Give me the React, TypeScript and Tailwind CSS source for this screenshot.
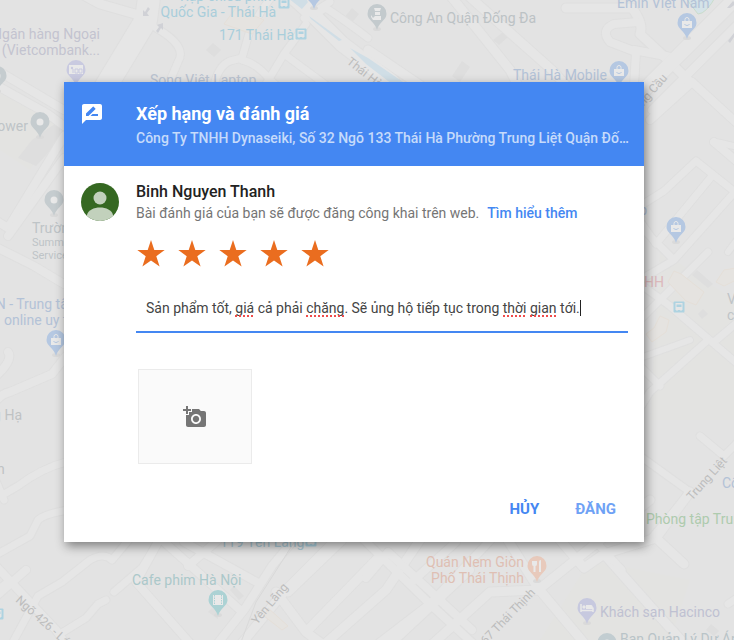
import { useState } from "react";
import { MdAddAPhoto, MdRateReview } from "react-icons/md";

type PinKind = "place" | "shop" | "bank" | "food" | "film" | "hotel" | "police";

const roads: { d: string; w: number }[] = [
  // top left
  { d: "M78 -8L100 4L142 16L132 34L104 90", w: 9 },
  { d: "M150 -10L146 20L100 96", w: 22 },
  { d: "M156 28Q188 46 178 62L166 90", w: 7 },
  { d: "M214 86Q218 66 230 61L242 58L250 30L262 10L272 -4", w: 7 },
  { d: "M242 60Q258 64 270 80L284 92M284 54L266 84M284 54L306 24M284 54L330 88", w: 7 },
  { d: "M290 -6L312 14L342 44L392 82", w: 15 },
  { d: "M304 18L330 2M308 18L326 8Q350 24 368 38", w: 7 },
  { d: "M368 50L430 92", w: 9 },
  { d: "M446 -10L510 70L520 90M462 -10L552 70L570 90", w: 9 },
  // top right
  { d: "M566 8L632 8Q644 24 640 34L668 60L690 82", w: 9 },
  { d: "M638 22L614 24Q600 30 610 42L636 52L634 86M634 50L676 58", w: 8 },
  { d: "M740 -6L640 94", w: 14 },
  { d: "M744 18L652 110M650 120L692 82L740 126M714 142L740 164", w: 8 },
  { d: "M640 206L664 191L696 161L740 196M640 221L656 244L712 176M640 226L674 260L740 186M640 280L674 260M640 284L670 306L740 366", w: 7 },
  { d: "M640 320L708 252M708 340L650 392L640 408M660 386L636 362M714 342L740 320M700 436L724 456L740 440M640 456L690 492L650 540", w: 7 },
  { d: "M740 236L728 252M734 146L716 142M640 358L690 340", w: 6 },
  // left side
  { d: "M-6 84L48 114L64 126M0 72L64 110M64 136L8 228L-8 218", w: 8 },
  { d: "M64 158L8 236M-6 246L34 266L64 284M-6 378Q14 360 8 352M-6 404Q0 394 10 392L52 374L66 356", w: 8 },
  { d: "M-6 500L18 486Q42 468 66 462M-6 556L30 536L38 520Q44 514 68 510M-6 476L4 500", w: 7 },
  // bottom left
  { d: "M-6 564L56 630L70 650M-6 598L26 570M6 584L-6 594", w: 8 },
  { d: "M14 640L38 596L62 582L90 560Q104 552 112 560L132 536M60 634L86 618L98 604L106 600M114 592L142 568L158 542", w: 7 },
  { d: "M158 542L136 582L196 650M162 540L240 610M188 566L218 540M184 542L260 584M214 648L244 610L272 566L302 530", w: 8 },
  { d: "M238 648L284 592L330 546M276 592L306 632L380 556M306 632L330 650M342 540L288 592M318 650L386 590L420 540", w: 9 },
  // bottom middle and right
  { d: "M360 536L430 604L480 650M388 552L366 578M388 552L472 630M414 580L456 542M430 604L500 530M370 650L430 604M380 654L470 570", w: 8 },
  { d: "M504 534L538 588L590 650M426 650L490 592L538 590L650 500M560 540L584 568L604 554L652 608L690 650M604 554L656 538L684 564M656 538L690 492", w: 9 },
  { d: "M728 604L740 596M596 542L622 570", w: 7 },
];

const buildings = [
  "M343 19L352 8L359 14L350 25Z",
  "M206 50L213 43L221 50L214 57Z",
  "M18 158L32 140L62 119L58 142L36 166Z",
  "M452 76L462 61L470 67L460 82Z",
  "M493 40L503 32L508 37L499 45Z",
  "M692 275L697 270L713 284L708 288Z",
  "M698 314L703 309L708 314L702 319Z",
  "M230 590L234 586L244 596L239 600Z",
  "M706 630L711 624L719 631L714 636Z",
  "M208 612L212 608L218 612L218 619Z",
];

const areas = [
  "M224 24L236 8L264 20L252 34Z",
  "M668 282L674 271L681 274L704 292L696 305L686 301Z",
  "M716 282L724 270L736 268L736 280L724 286Z",
  "M646 334L654 328L660 316L669 320L666 332L652 342Z",
  "M264 616L268 608L288 626L282 630Z",
];

const pins: { x: number; y: number; kind: PinKind; color: string }[] = [
  { x: -3, y: 76, kind: "place", color: "#c5cccf" },
  { x: 76, y: 70, kind: "bank", color: "#c9cae0" },
  { x: 40, y: 122, kind: "place", color: "#c5cccf" },
  { x: 54, y: 200, kind: "place", color: "#c5cccf" },
  { x: 56, y: 340, kind: "shop", color: "#b5c8e2" },
  { x: 314, y: -7, kind: "shop", color: "#b5c8e2" },
  { x: 377, y: 14, kind: "police", color: "#c3cacd" },
  { x: 687, y: 23, kind: "shop", color: "#b5c8e2" },
  { x: 619, y: 71, kind: "shop", color: "#b5c8e2" },
  { x: 676, y: 227, kind: "shop", color: "#b5c8e2" },
  { x: 218, y: 600, kind: "film", color: "#acd2d4" },
  { x: 537, y: 566, kind: "food", color: "#e8cabc" },
  { x: 587, y: 608, kind: "hotel", color: "#c7c9df" },
  { x: 607, y: 643, kind: "place", color: "#c2cdd1" },
];

const stops = [
  { x: 284, y: 3 },
  { x: 301, y: 34 },
  { x: 679, y: 307 },
  { x: 311, y: 541 },
  { x: -2, y: 614 },
];

const labels: {
  text: string;
  x: number;
  y: number;
  color: string;
  end?: boolean;
  small?: boolean;
  rotate?: number;
}[] = [
  { text: "Rạp chiếu phim", x: 276, y: 1, color: "#a9cedb", end: true },
  { text: "Quốc Gia - Thái Hà", x: 276, y: 17, color: "#a9cedb", end: true },
  { text: "171 Thái Hà", x: 294, y: 40, color: "#a9cedb", end: true },
  { text: "Ngân hàng Ngoại", x: 100, y: 39, color: "#c3c4d0", end: true },
  { text: "(Vietcombank...", x: 100, y: 55, color: "#c3c4d0", end: true },
  { text: "Song Việt Laptop", x: 150, y: 85, color: "#b9c2d0" },
  { text: "Công An Quận Đống Đa", x: 390, y: 23, color: "#bcc2c5" },
  { text: "Emin Việt Nam", x: 617, y: 8, color: "#b3c2d7" },
  { text: "Thái Hà Mobile", x: 513, y: 80, color: "#b3c2d7" },
  { text: "Tower", x: 28, y: 131, color: "#bec4c7", end: true },
  { text: "Trường", x: 32, y: 233, color: "#bec4c7" },
  { text: "Summit", x: 32, y: 246, color: "#bec4c7", small: true },
  { text: "Services", x: 32, y: 259, color: "#bec4c7", small: true },
  { text: "FAN - Trung tâm", x: -20, y: 309, color: "#b3c2d7" },
  { text: "online uy tín", x: 4, y: 325, color: "#b3c2d7" },
  { text: "Làng Hạ", x: 22, y: 420, color: "#bfc2c4", end: true },
  { text: "n", x: -3, y: 474, color: "#bfc2c4" },
  { text: "Shop", x: 647, y: 215, color: "#b3c2d7", end: true },
  { text: "TNHH", x: 664, y: 287, color: "#dcb9bc", end: true },
  { text: "Vi", x: 727, y: 304, color: "#bfc4c7" },
  { text: "cá", x: 727, y: 320, color: "#bfc4c7" },
  { text: "Công", x: 722, y: 488, color: "#b3c2d7" },
  { text: "Phòng tập Trung", x: 646, y: 524, color: "#aecbae" },
  { text: "119 Yên Lãng", x: 220, y: 547, color: "#a9c8d4" },
  { text: "Cafe phim Hà Nội", x: 132, y: 585, color: "#abc8ca" },
  { text: "Quán Nem Giòn", x: 524, y: 567, color: "#dfbfb3", end: true },
  { text: "Phố Thái Thịnh", x: 524, y: 583, color: "#dfbfb3", end: true },
  { text: "Khách sạn Hacinco", x: 600, y: 617, color: "#bfc1d2" },
  { text: "Ban Quản Lý Dự Án", x: 620, y: 644, color: "#b9c4c8" },
  { text: "Thái Hà", x: 346, y: 63, color: "#bdbdbd", small: true, rotate: 38 },
  { text: "Hoàng Cầu", x: 629, y: 123, color: "#bdbdbd", small: true, rotate: -49 },
  { text: "Trung Liệt", x: 692, y: 501, color: "#bdbdbd", small: true, rotate: -48 },
  { text: "Ngõ 426 - Láng", x: 15, y: 601, color: "#bdbdbd", small: true, rotate: 42 },
  { text: "Yên Lãng", x: 257, y: 625, color: "#bdbdbd", small: true, rotate: -50 },
  { text: "167 Thái Thịnh", x: 481, y: 650, color: "#bdbdbd", small: true, rotate: -46 },
];

function PinGlyph({ kind }: { kind: PinKind }) {
  const fill = "#e9e9e9";
  switch (kind) {
    case "shop":
      return (
        <>
          <path d="M-5 -2H5V5H-5Z" fill={fill} />
          <path d="M-2 -2V-3.5A2 2 0 0 1 2 -3.5V-2" fill="none" stroke={fill} />
          <path d="M-2.5 1A2.7 2.4 0 0 0 2.5 1" fill="none" stroke="#b5c8e2" />
        </>
      );
    case "bank":
      return (
        <>
          <path d="M-7 -5H7V4H-7Z" fill={fill} />
          <circle cx={-4} cy={-2} r={1.2} fill="#c9cae0" />
          <path d="M-3 -1V3M-1 -1H2V3H-1ZM3 -1H6V3H3Z" fill="none" stroke="#c9cae0" />
        </>
      );
    case "food":
      return (
        <>
          <path d="M-5 -5V-2Q-5 0 -3.500 0V6H-1.500V0Q0 0 0 -2V-5Z" fill={fill} />
          <path d="M2 6V-4Q2 -6 4 -6V6Z" fill={fill} />
        </>
      );
    case "film":
      return (
        <>
          <path d="M-5 -5H5V5H-5Z" fill={fill} />
          <path d="M-3.500 -5V5M3.500 -5V5" stroke="#acd2d4" strokeDasharray="1.500 1" />
        </>
      );
    case "hotel":
      return (
        <>
          <path d="M-6 -4V4M-6 2.500H6M6 4V-0.500" stroke={fill} strokeWidth={1.5} />
          <path d="M-1 -3H4Q6 -3 6 1H-1Z" fill={fill} />
          <circle cx={-3} cy={-1} r={1.7} fill={fill} />
        </>
      );
    case "police":
      return (
        <>
          <path d="M-3 -6H4L3 -3H-2ZM-2 -2H3V1H-2Z" fill={fill} />
          <path d="M-6 1L-4 4L-2 2H4V6H-4L-6 3Z" fill={fill} />
        </>
      );
    default:
      return <circle r={3.5} fill={fill} />;
  }
}

function MapBackground() {
  return (
    <svg
      className="absolute inset-0 h-full w-full"
      viewBox="0 0 734 640"
      preserveAspectRatio="xMidYMid slice"
      fontFamily='Roboto, "Noto Sans", sans-serif'
      aria-hidden="true"
    >
      <rect width="734" height="640" fill="#e3e3e3" />
      <path d="M660 250L734 300V420H650ZM590 560L690 580L670 640H540ZM0 90L60 120L30 170L0 150Z" fill="#e3e3e1" />
      {buildings.map((d) => (
        <path key={d} d={d} fill="#dedede" />
      ))}
      {roads.map((road) => (
        <path key={road.d} d={road.d} fill="none" stroke="#dfdfdf" strokeWidth={road.w + 2} strokeLinejoin="round" strokeLinecap="round" />
      ))}
      {roads.map((road) => (
        <path key={road.d} d={road.d} fill="none" stroke="#e6e6e6" strokeWidth={road.w} strokeLinejoin="round" strokeLinecap="round" />
      ))}
      {areas.map((d) => (
        <path key={d} d={d} fill="#e5e3e0" stroke="#e5dfd8" />
      ))}
      <path d="M288 -2L302 9L308 2L304 -4ZM309 16L342 40L339 41L311 19ZM350 48L368 58L406 84H392L366 64Z" fill="#d0dee6" />
      <path d="M684 -4L698 14Q706 14 716 -4Z" fill="#d5e3e8" stroke="#c9dccb" />
      <path d="M302 530L256 602L238 650" fill="none" stroke="#d9d9d9" />
      {/* one-way arrows */}
      <path d="M148 7L150 9L147 13L149 16L143 16L143 10L145 12ZM156 31L158 33L161 28L163 30L163 23L157 25L159 27Z" fill="#d0d1d6" />
      <path d="M727 8L733 1L736 4L730 8ZM728 41L734 33V37L730 43Z" fill="#d0d1d6" />
      {stops.map((stop) => (
        <g key={stop.x} transform={`translate(${stop.x} ${stop.y})`}>
          <rect x="-5.5" y="-5.5" width="11" height="11" rx="1" fill="#aed3e1" />
          <path d="M-3.500 -4H3.500V3H2.500V4H1.500V3H-1.500V4H-2.500V3H-3.500Z" fill="#e6e6e6" />
          <path d="M-2.500 -2.500H2.500V0H-2.500Z" fill="#aed3e1" />
        </g>
      ))}
      {labels.map((label) => (
        <text
          key={label.text}
          x={label.x}
          y={label.y}
          fill={label.color}
          fontSize={label.small ? (label.rotate ? 12 : 11) : 14}
          textAnchor={label.end ? "end" : "start"}
          transform={label.rotate ? `rotate(${label.rotate} ${label.x} ${label.y})` : undefined}
        >
          {label.text}
        </text>
      ))}
      {pins.map((pin) => (
        <g key={`${pin.x}-${pin.y}`} transform={`translate(${pin.x} ${pin.y})`}>
          <ellipse cy="15" rx="4" ry="2" fill="#dadada" />
          <path d="M0 -10A9.500 9.500 0 0 1 9.500 0C9.500 6 2 8 0 16C-2 8 -9.500 6 -9.500 0A9.500 9.500 0 0 1 0 -10Z" fill={pin.color} />
          <PinGlyph kind={pin.kind} />
        </g>
      ))}
    </svg>
  );
}

function Avatar() {
  return (
    <svg className="size-[38px] rounded-full" viewBox="0 0 38 38" role="img" aria-label="Binh Nguyen Thanh">
      <rect width="38" height="38" fill="#356821" />
      <circle cx="19" cy="15" r="6.5" fill="#c2d1bc" />
      <path d="M6 38V32C7 27 13 24.500 19 24.500S31 27 32 32V38Z" fill="#c2d1bc" />
    </svg>
  );
}

function StarRating({ value, onChange }: { value: number; onChange: (value: number) => void }) {
  return (
    <div className="flex gap-[11px]">
      {[1, 2, 3, 4, 5].map((star) => (
        <button key={star} type="button" aria-label={`${star} sao`} onClick={() => onChange(star)} className="cursor-pointer">
          <svg className="size-[30px]" viewBox="0 0 30 30">
            <path
              d="M15 1L18.300 11H28.700L20.300 17.200L23.600 27.500L15 21.400L6.400 27.500L9.700 17.200L1.300 11H11.700Z"
              fill={star <= value ? "#ea6d1f" : "#dadce0"}
            />
          </svg>
        </button>
      ))}
    </div>
  );
}

const misspelled = ["giá", "chăng", "thời", "gian"];

function ReviewInput() {
  const [review, setReview] = useState(
    "Sản phẩm tốt, giá cả phải chăng. Sẽ ủng hộ tiếp tục trong thời gian tới."
  );

  return (
    <div className="relative border-b-2 border-[#4487f2]">
      <textarea
        aria-label="Đánh giá của bạn"
        className="block h-[46px] w-full resize-none px-[10px] pt-[13px] text-sm text-[#444] caret-transparent outline-none"
        spellCheck={false}
        value={review}
        onChange={(e) => setReview(e.target.value)}
      />
      {/* spelling marks and caret sit over the text */}
      <div
        aria-hidden="true"
        className="pointer-events-none absolute inset-0 px-[10px] pt-[13px] text-sm whitespace-pre-wrap text-transparent"
      >
        {review.split(/([\s.,]+)/).map((word, index) =>
          misspelled.includes(word) ? (
            <span
              key={index}
              className="underline decoration-[#f04b4b] decoration-dotted decoration-2 underline-offset-2 [text-decoration-skip-ink:none]"
            >
              {word}
            </span>
          ) : (
            word
          )
        )}
        <span className="inline-block h-4 w-px bg-[#222] align-text-bottom" />
      </div>
    </div>
  );
}

export default function App() {
  const [rating, setRating] = useState(5);

  return (
    <main className='relative min-h-screen overflow-hidden pt-[82px] pr-[90px] pb-[98px] pl-16 font-[Roboto,"Noto_Sans",sans-serif]'>
      <MapBackground />
      <section
        role="dialog"
        aria-labelledby="review-title"
        className="relative bg-white shadow-[2px_4px_10px_rgba(0,0,0,0.45)]"
      >
        <header className="flex bg-[#4487f2] pt-5 pr-3 pb-4 pl-4 text-white">
          <MdRateReview className="size-6 shrink-0" />
          <div className="ml-8 min-w-0 flex-1">
            <h1 id="review-title" className="text-lg leading-6 font-bold">
              Xếp hạng và đánh giá
            </h1>
            <p className="truncate text-sm leading-6 font-medium text-[#c6dbfb]">
              Công Ty TNHH Dynaseiki, Số 32 Ngõ 133 Thái Hà Phường Trung Liệt Quận Đống Đa, Hà Nội
            </p>
          </div>
        </header>

        <div className="flex pt-4 pr-4 pl-[17px]">
          <div className="w-[55px] shrink-0 pt-px">
            <Avatar />
          </div>
          <div className="min-w-0 flex-1">
            <h2 className="text-base leading-5 font-medium text-[#222]">Binh Nguyen Thanh</h2>
            <p className="text-sm leading-[22px] text-[#757575]">
              Bài đánh giá của bạn sẽ được đăng công khai trên web.
              <a href="#" className="ml-2 font-medium text-[#4487f2]">
                Tìm hiểu thêm
              </a>
            </p>
            <div className="mt-[15px] mb-4">
              <StarRating value={rating} onChange={setRating} />
            </div>
            <ReviewInput />
            <button
              type="button"
              aria-label="Thêm ảnh"
              className="mt-9 ml-0.5 flex h-[95px] w-[114px] cursor-pointer items-center justify-center border border-[#ebebeb] bg-[#fafafa] text-[#757575]"
            >
              <MdAddAPhoto className="size-6" />
            </button>
          </div>
        </div>

        <footer className="flex justify-end gap-5 px-5 pt-[27px] pb-[15px] text-[15px] font-bold text-[#4487f2]">
          <button type="button" className="h-9 cursor-pointer px-2">
            HỦY
          </button>
          <button type="button" className="h-9 cursor-pointer px-2 text-[#6fa2f5]">
            ĐĂNG
          </button>
        </footer>
      </section>
    </main>
  );
}
